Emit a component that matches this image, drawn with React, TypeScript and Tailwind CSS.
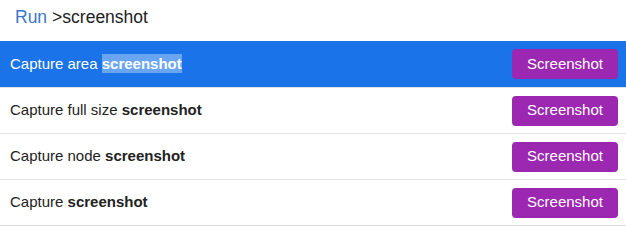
const rows = [
  { label: "Capture area", active: true },
  { label: "Capture full size", active: false },
  { label: "Capture node", active: false },
  { label: "Capture", active: false },
];

export default function App() {
  return (
    <div className="w-[626px] h-[228px] bg-white font-['Liberation_Sans',Arial,sans-serif]">
      <div className="h-[41px] flex items-center pl-[15px] pb-[7px] text-[17.5px] text-[#202124]">
        <span className="text-[#3b78c9]">Run</span>
        <span className="ml-[5px]">&gt;screenshot</span>
      </div>
      <div className="border-b border-[#dedede]">
        {rows.map((row, i) => (
          <div
            key={i}
            className={
              row.active
                ? "h-[46px] flex items-center justify-between pl-[10px] pr-[8px] bg-[#1a73e8] text-white"
                : "h-[46px] flex items-center justify-between pl-[10px] pr-[8px] border-t border-[#e3e3e3] text-[#222]"
            }
          >
            <div className="text-[15px]">
              {row.label}{" "}
              <span
                className={
                  row.active
                    ? "font-bold bg-[#6aa5f2] py-[1px]"
                    : "font-bold"
                }
              >
                screenshot
              </span>
            </div>
            <button
              type="button"
              className="w-[106px] h-[30px] rounded-[4px] bg-[#9c27b0] text-white text-[15px]"
            >
              Screenshot
            </button>
          </div>
        ))}
      </div>
    </div>
  );
}
